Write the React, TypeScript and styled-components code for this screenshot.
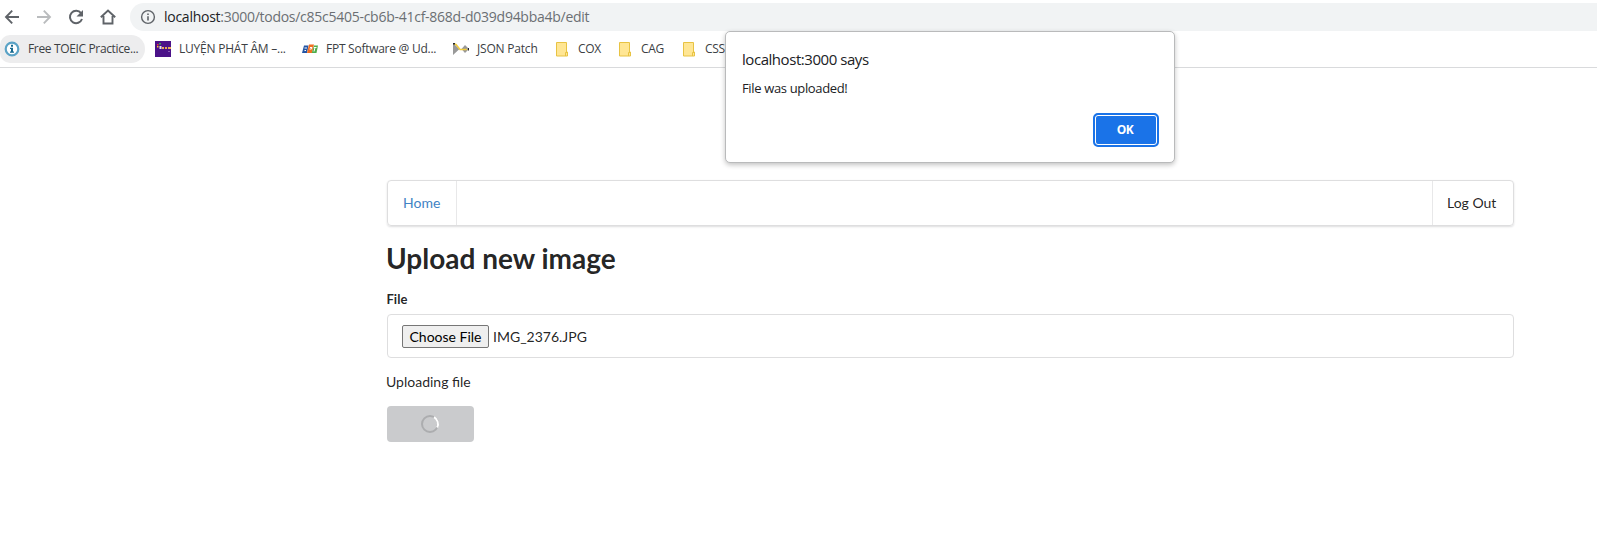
import React from "react";
import styled, { createGlobalStyle } from "styled-components";

const Global = createGlobalStyle`
  *, *::before, *::after { box-sizing: border-box; }
  html, body { margin: 0; padding: 0; background: #fff; overflow: hidden; }
  body { font-family: Lato, "Liberation Sans", sans-serif; font-size: 14px; line-height: 20px; color: rgba(0,0,0,.87); }
`;

const Page = styled.div`
  position: relative;
  width: 1597px;
  height: 559px;
  overflow: hidden;
`;

const Chrome = styled.header`
  height: 68px;
  padding-top: 3px;
  border-bottom: 1px solid #d9dadc;
  font-family: "Open Sans", "Noto Sans", sans-serif;
`;

const Toolbar = styled.div`
  display: flex;
  height: 28px;
`;

const NavIcons = styled.div`
  display: flex;
  align-items: center;
  width: 130px;
  flex: none;
  gap: 16px;
  padding-left: 4px;
`;

const AddressBar = styled.div`
  flex: 1;
  display: flex;
  align-items: center;
  gap: 8px;
  padding-left: 10px;
  background: #f1f3f4;
  border-radius: 14px 0 0 14px;
`;

const Label = styled.span<{ $size: number; $spacing?: number }>`
  font-size: ${(p) => p.$size}px;
  letter-spacing: ${(p) => p.$spacing ?? 0}px;
  white-space: nowrap;
`;

const Url = styled(Label)`
  color: #6b6f73;
  b { font-weight: 400; color: #202124; }
`;

const Bookmarks = styled.nav`
  display: flex;
  height: 28px;
  margin-top: 4px;
  color: #3c4043;
`;

const Bookmark = styled.div<{ $width: number; $active?: boolean }>`
  display: flex;
  align-items: center;
  flex: none;
  gap: 8px;
  width: ${(p) => p.$width}px;
  padding-left: ${(p) => (p.$active ? 4 : 8)}px;
  border-radius: ${(p) => (p.$active ? "10px 14px 14px 10px" : "0")};
  background: ${(p) => (p.$active ? "#ededee" : "transparent")};
  margin-right: 2px;
  svg { flex: none; }
`;

const FolderItem = styled(Bookmark)`
  gap: 10px;
`;

const Container = styled.main`
  width: 1127px;
  margin: 112px 0 0 387px;
`;

const Menu = styled.nav`
  display: flex;
  justify-content: space-between;
  height: 46px;
  border: 1px solid #dededf;
  border-radius: 4px;
  box-shadow: 0 1px 2px rgba(34,36,38,.15);
`;

const MenuItem = styled.a<{ $right?: boolean }>`
  display: flex;
  align-items: center;
  width: ${(p) => (p.$right ? 81 : 69)}px;
  padding-left: ${(p) => (p.$right ? 14 : 15)}px;
  color: ${(p) => (p.$right ? "rgba(0,0,0,.87)" : "#4183c4")};
  border-left: ${(p) => (p.$right ? "1px solid #e8e8e9" : "0")};
  border-right: ${(p) => (p.$right ? "0" : "1px solid #e8e8e9")};
`;

const Title = styled.h1`
  margin: 14px 0 0 -1px;
  font-size: 28px;
  line-height: 36px;
  font-weight: 700;
`;

const FieldLabel = styled.label`
  display: block;
  margin: 14px 0 5px -0.5px;
  font-size: 13px;
  line-height: 19px;
  font-weight: 700;
`;

const FileField = styled.div`
  display: flex;
  align-items: center;
  gap: 4px;
  height: 44px;
  padding-left: 14px;
  border: 1px solid #dededf;
  border-radius: 4px;
`;

const FileName = styled.span`
  padding-top: 2px;
`;

const ChooseButton = styled.button`
  width: 87px;
  height: 23px;
  padding: 0;
  font: 14px Lato, sans-serif;
  color: #000;
  background: #efefef;
  border: 1px solid #767676;
  border-radius: 2px;
`;

const Status = styled.p`
  margin: 14px 0 14px -1px;
  line-height: 20px;
`;

const LoadingButton = styled.button`
  display: flex;
  align-items: center;
  justify-content: center;
  width: 87px;
  height: 36px;
  padding: 0 1px 0 0;
  border: 0;
  border-radius: 4px;
  background: #cacbcd;
`;

const Dialog = styled.section`
  position: absolute;
  left: 725px;
  top: 31px;
  width: 450px;
  height: 132px;
  padding: 17px 16px 16px;
  display: flex;
  flex-direction: column;
  background: #fff;
  border: 1px solid #b9babb;
  border-radius: 5px;
  box-shadow: 0 2px 5px rgba(0,0,0,.24);
  font-family: "Open Sans", "Noto Sans", sans-serif;
  color: #202124;
`;

const DialogText = styled(Label)`
  margin-top: 10px;
  line-height: 18px;
`;

const OkButton = styled.button`
  align-self: flex-end;
  width: 66px;
  height: 34px;
  margin: auto -1px -1px 0;
  padding: 0 2px 2px 0;
  border: 2px solid #1a73e8;
  border-radius: 5px;
  background: #1a73e8;
  box-shadow: inset 0 0 0 1px #fff;
  color: #fff;
  font: 700 12px "Open Sans", sans-serif;
  letter-spacing: -0.5px;
`;

const Icon = ({ d, color = "#5f6368", w = 1.9 }: { d: string; color?: string; w?: number }) => (
  <svg width="16" height="16" viewBox="0 0 16 16" fill="none" stroke={color} strokeWidth={w}>
    <path d={d} />
  </svg>
);

const Folder = () => (
  <svg width="12" height="15" viewBox="0 0 12 15">
    <path d="M.5.5h10v9.5h1v4H.5z" fill="#ffe694" stroke="#e8c343" />
    <path d="M9.500 14v-3.500h2" fill="none" stroke="#e8c343" />
  </svg>
);

const folders: [string, number][] = [["COX", 61], ["CAG", 62], ["CSS", 62]];

export default function App() {
  return (
    <Page>
      <Global />
      <Chrome>
        <Toolbar>
          <NavIcons>
            <Icon d="M15 8H2M8.200 1.700 2 8l6.200 6.300" />
            <Icon d="M1 8h13M7.800 1.700 14 8l-6.200 6.300" color="#babcbe" />
            <svg width="16" height="16" viewBox="0 0 16 16">
              <path d="M13.100 4.200A6.200 6.200 0 1 0 14 10" fill="none" stroke="#5f6368" strokeWidth="2" />
              <path d="M15 1v6.500H8.500z" fill="#5f6368" />
            </svg>
            <Icon d="M.8 8.300 8 1.500l7.200 6.800M3.500 7v7.500h9V7" />
          </NavIcons>
          <AddressBar>
            <svg width="16" height="16" viewBox="0 0 16 16">
              <circle cx="8" cy="8" r="6.400" fill="none" stroke="#5f6368" strokeWidth="1.400" />
              <path d="M7.200 7.200h1.600v4.300H7.200zM7.200 4.500h1.600V6H7.200z" fill="#5f6368" />
            </svg>
            <Url $size={14} $spacing={-0.265}><b>localhost</b>:3000/todos/c85c5405-cb6b-41cf-868d-d039d94bba4b/edit</Url>
          </AddressBar>
        </Toolbar>
        <Bookmarks>
          <Bookmark $width={145} $active>
            <svg width="16" height="16" viewBox="0 0 16 16">
              <circle cx="8" cy="8" r="6.300" fill="#fff" stroke="#5ba3c6" strokeWidth="2.200" />
              <path d="M7 3.800h2v2H7zM6 6.800h3v3.700h1v1.200H6v-1.200h1V8H6z" fill="#17698f" />
            </svg>
            <Label $size={12} $spacing={-0.35}>Free TOEIC Practice...</Label>
          </Bookmark>
          <Bookmark $width={145}>
            <svg width="16" height="16" viewBox="0 0 16 16">
              <path d="M0 0h16v16H0z" fill="#4b1289" />
              <path d="M2 3h1.500v1.500H2z" fill="#e33" />
              <path d="M4 2h2v1.500H4z" fill="#39a94a" />
              <path d="M2 5h1.500v1.500H2z" fill="#f3c52e" />
              <path d="M4.500 5h2v3h-2z" fill="#e9dff0" />
              <path d="M7 6h2v2H7zM10 6h2v2h-2zM13 6h3v2h-3z" fill="#e9ad58" />
              <path d="M13 10h2v1h-2z" fill="#8b5bb5" />
            </svg>
            <Label $size={12} $spacing={-0.23}>LUYỆN PHÁT ÂM –...</Label>
          </Bookmark>
          <Bookmark $width={149}>
            <svg width="16" height="16" viewBox="0 0 16 16">
              <path d="M2 4.500h4.500L5 12H0z" fill="#2456a5" />
              <path d="M7 3.500h5L10 12H5z" fill="#f26f21" />
              <path d="M12 4.500h4L14.500 12H9.800z" fill="#4fae4b" />
              <path d="M2.500 7h2.500M2.500 9.500h1.500M8 6.500h2l-.5 1.500h-2M12 6.500h2.500M13 6.500l-1 4" stroke="#fff" fill="none" />
            </svg>
            <Label $size={12} $spacing={-0.26}>FPT Software @ Ud...</Label>
          </Bookmark>
          <Bookmark $width={101}>
            <svg width="16" height="16" viewBox="0 0 16 16">
              <path d="M0 2l6.500 6L0 14zM8.500 8l3.500-4 4 4-4 4z" fill="#999" />
              <path d="M1 3l2 .5L7 8.500h7" stroke="#f1cc3c" strokeWidth="1.500" fill="none" />
              <path d="M0 2h2v1.500H0zM15 7h1v2.500h-1z" fill="#222" />
            </svg>
            <Label $size={12} $spacing={-0.2}>JSON Patch</Label>
          </Bookmark>
          {folders.map(([name, width]) => (
            <FolderItem key={name} $width={width}>
              <Folder />
              <Label $size={12} $spacing={-0.35}>{name}</Label>
            </FolderItem>
          ))}
        </Bookmarks>
      </Chrome>
      <Container>
        <Menu>
          <MenuItem>Home</MenuItem>
          <MenuItem $right>Log Out</MenuItem>
        </Menu>
        <Title>Upload new image</Title>
        <FieldLabel>File</FieldLabel>
        <FileField>
          <ChooseButton>Choose File</ChooseButton>
          <FileName>IMG_2376.JPG</FileName>
        </FileField>
        <Status>Uploading file</Status>
        <LoadingButton aria-label="Uploading">
          <svg width="20" height="20" viewBox="0 0 20 20" fill="none" strokeWidth="2">
            <circle cx="10" cy="10" r="8" stroke="#acadaf" />
            <path d="M14 3.100A8 8 0 0 1 17.200 13.500" stroke="#fff" />
          </svg>
        </LoadingButton>
      </Container>
      <Dialog role="dialog">
        <Label $size={15} $spacing={-0.45}>localhost:3000 says</Label>
        <DialogText $size={13} $spacing={-0.35}>File was uploaded!</DialogText>
        <OkButton>OK</OkButton>
      </Dialog>
    </Page>
  );
}
